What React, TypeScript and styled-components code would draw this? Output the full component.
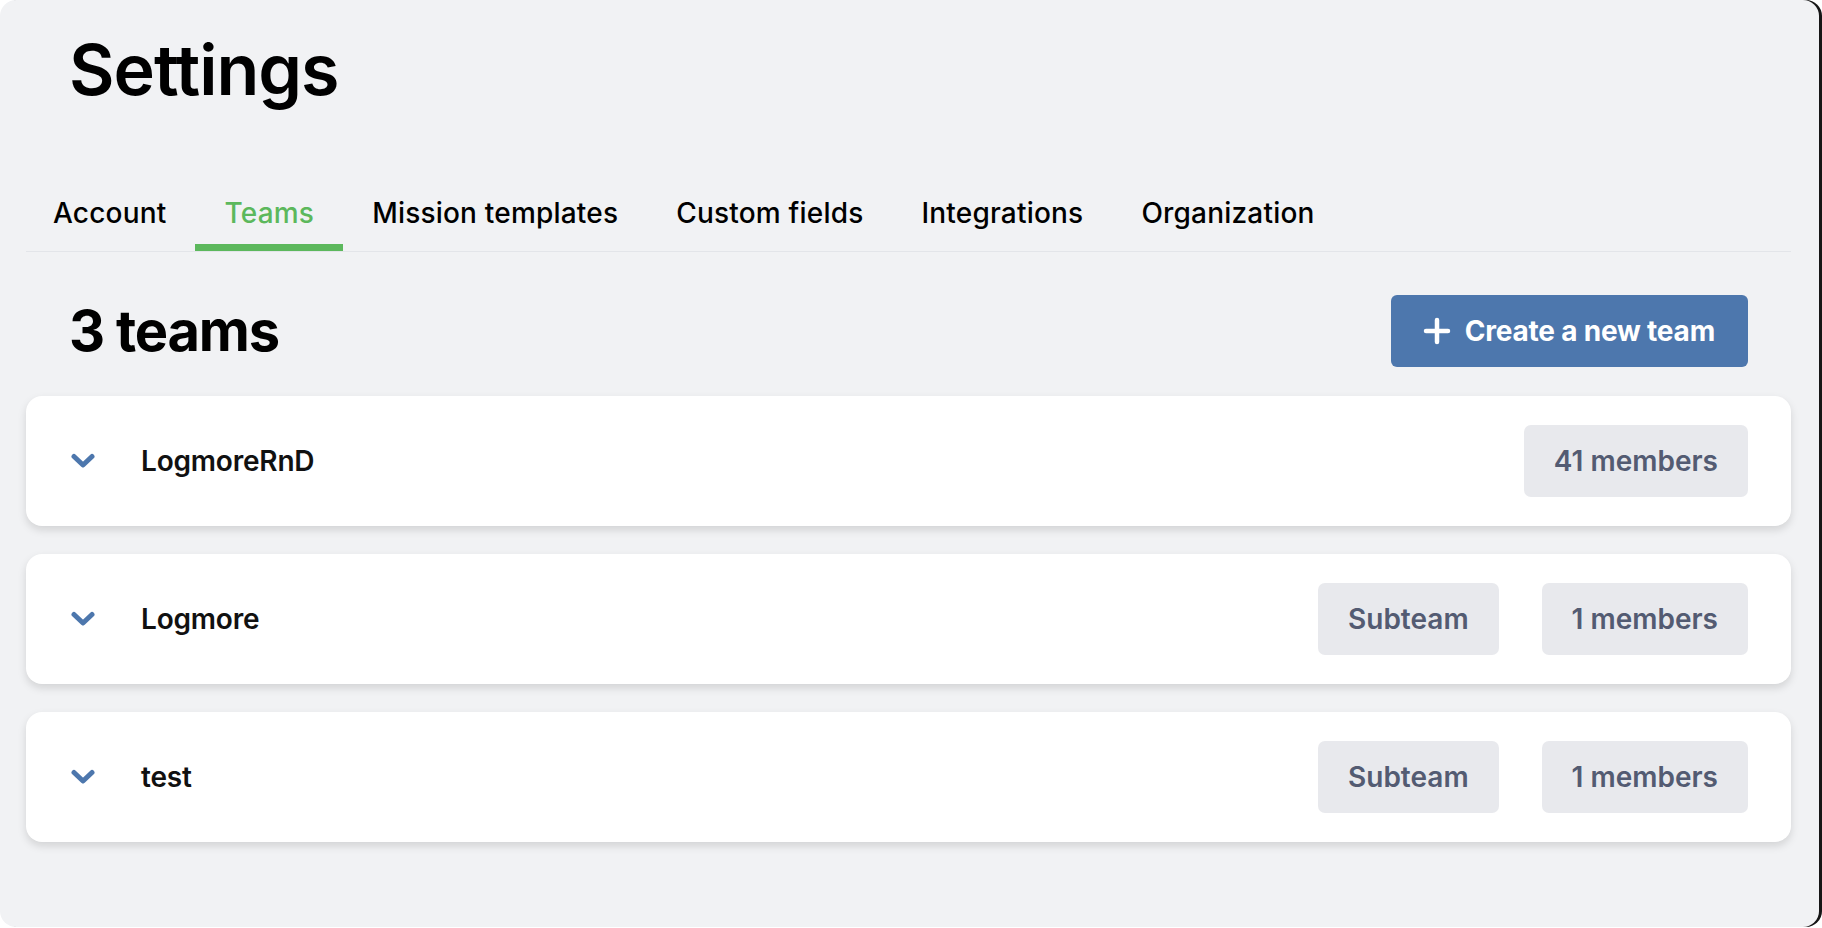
import React, { useState } from 'react'
import styled, { createGlobalStyle } from 'styled-components'

const GREEN = '#5cb85c'
const BLUE = '#4d77ad'

const GlobalStyle = createGlobalStyle`
  html, body {
    margin: 0;
    padding: 0;
    background: #ffffff;
  }
  body {
    font-family: Inter, "Noto Sans", "Liberation Sans", sans-serif;
    color: #111;
  }
  * {
    box-sizing: border-box;
  }
`

const Panel = styled.div`
  width: 1819px;
  height: 927px;
  background: #f1f2f4;
  border-radius: 16px;
  box-shadow: 3px 0 0 #161616;
  padding: 28px 28px 0 26px;
  display: flex;
  flex-direction: column;
`

const Title = styled.h1`
  margin: 0 0 0 43px;
  font-size: 70px;
  line-height: 84px;
  font-weight: 600;
  letter-spacing: -1px;
  color: #000;
`

const TabBar = styled.nav`
  display: flex;
  margin-top: 84px;
  border-bottom: 1px solid #e3e5e9;
`

const Tab = styled.button<{ active?: boolean }>`
  appearance: none;
  background: none;
  border: none;
  border-bottom: 7px solid ${props => props.active ? GREEN : 'transparent'};
  padding: 0 29px 14px;
  font-family: inherit;
  font-size: 28px;
  line-height: 34px;
  font-weight: 550;
  letter-spacing: 0.2px;
  color: ${props => props.active ? GREEN : '#000'};
  cursor: pointer;

  &:first-child {
    padding-left: 27px;
  }
`

const HeaderRow = styled.div`
  display: flex;
  align-items: center;
  justify-content: space-between;
  margin-top: 43px;
  padding: 0 43px 0 43px;
`

const Count = styled.h2`
  margin: 0;
  font-size: 56px;
  line-height: 70px;
  font-weight: 650;
  letter-spacing: -1.2px;
  color: #000;
`

const CreateButton = styled.button`
  display: flex;
  align-items: center;
  gap: 14px;
  height: 72px;
  padding: 0 33px 0 32px;
  border: none;
  border-radius: 6px;
  background: ${BLUE};
  color: #fff;
  font-family: inherit;
  font-size: 28px;
  font-weight: 650;
  letter-spacing: -0.2px;
  cursor: pointer;
`

const List = styled.div`
  display: flex;
  flex-direction: column;
  gap: 28px;
  margin-top: 29px;
`

const Card = styled.div`
  display: flex;
  align-items: center;
  height: 130px;
  padding: 0 43px 0 45px;
  background: #fff;
  border-radius: 16px;
  box-shadow: 0 4px 8px rgba(0, 0, 0, 0.13);
`

const Toggle = styled.button`
  display: flex;
  align-items: center;
  justify-content: center;
  width: 24px;
  padding: 0;
  border: none;
  background: none;
  cursor: pointer;
`

const TeamName = styled.span`
  flex: 1;
  margin-left: 46px;
  font-size: 28px;
  font-weight: 600;
  letter-spacing: -0.2px;
  color: #111;
`

const Badges = styled.div`
  display: flex;
  gap: 43px;
`

const Badge = styled.span`
  display: flex;
  align-items: center;
  height: 72px;
  padding: 0 30px;
  border-radius: 7px;
  background: #e8e9ed;
  color: #535b72;
  font-size: 28px;
  font-weight: 600;
`

const Chevron = () => (
  <svg width="24" height="16" viewBox="0 0 24 16" fill="none">
    <polyline points="3,3.5 12,12 21,3.5" stroke={BLUE} strokeWidth="5" strokeLinecap="round" strokeLinejoin="round" />
  </svg>
)

const Plus = () => (
  <svg width="28" height="28" viewBox="0 0 28 28" fill="none">
    <path d="M14 3v22M3 14h22" stroke="#fff" strokeWidth="4.5" strokeLinecap="round" />
  </svg>
)

const TABS = ['Account', 'Teams', 'Mission templates', 'Custom fields', 'Integrations', 'Organization']

const TEAMS = [
  { name: 'LogmoreRnD', members: 41, subteam: false },
  { name: 'Logmore', members: 1, subteam: true },
  { name: 'test', members: 1, subteam: true },
]

export default function App () {
  const [tab, setTab] = useState('Teams')

  return (
    <>
      <GlobalStyle />
      <Panel>
        <Title>Settings</Title>
        <TabBar>
          {TABS.map(t => (
            <Tab key={t} active={t === tab} onClick={() => setTab(t)}>{t}</Tab>
          ))}
        </TabBar>
        <HeaderRow>
          <Count>{TEAMS.length} teams</Count>
          <CreateButton type={'button'}>
            <Plus />
            Create a new team
          </CreateButton>
        </HeaderRow>
        <List>
          {TEAMS.map(team => (
            <Card key={team.name}>
              <Toggle type={'button'}><Chevron /></Toggle>
              <TeamName>{team.name}</TeamName>
              <Badges>
                {team.subteam && <Badge>Subteam</Badge>}
                <Badge>{team.members} members</Badge>
              </Badges>
            </Card>
          ))}
        </List>
      </Panel>
    </>
  )
}
